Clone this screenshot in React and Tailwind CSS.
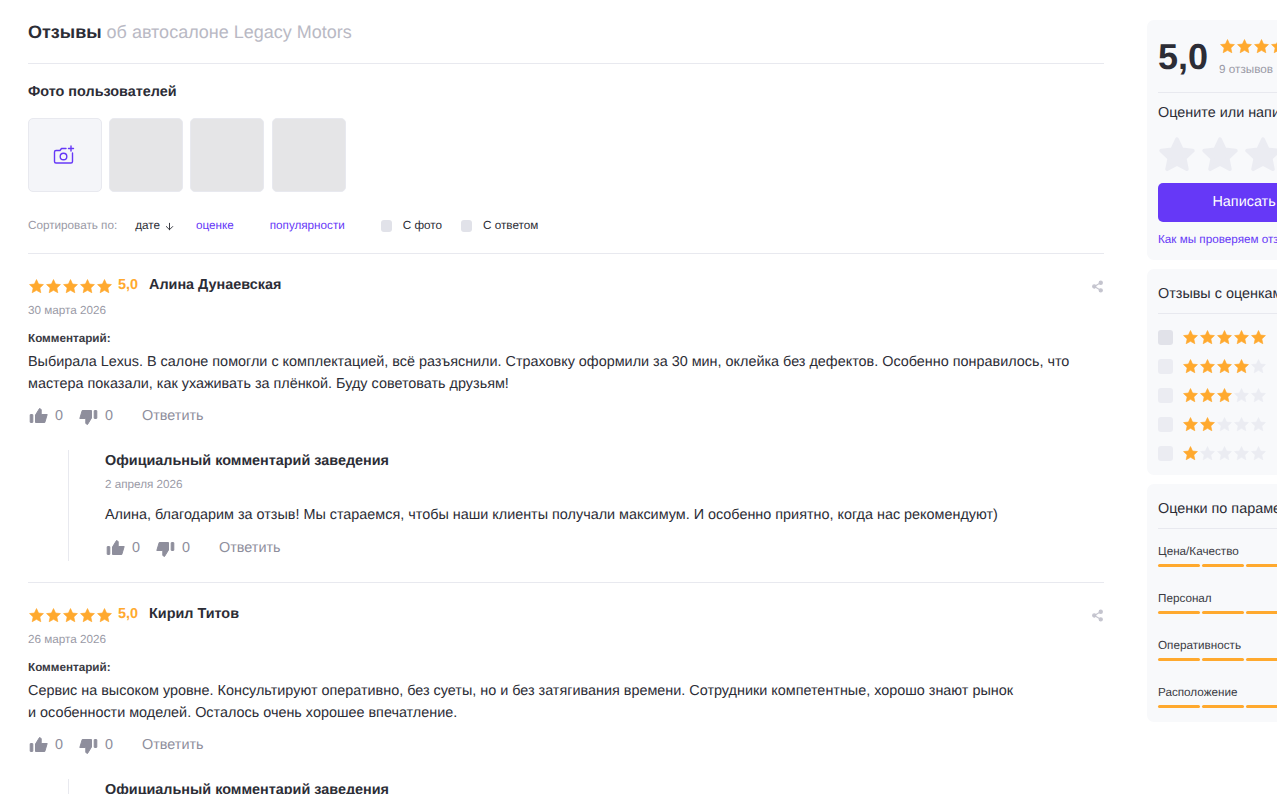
import { ArrowDown, Share2 } from "lucide-react";

const STAR = "M12 2.2l2.9 6.3 6.9.8-5.1 4.7 1.4 6.8L12 17.4l-6.1 3.4 1.4-6.8L2.2 9.3l6.9-.8z";

function Star({ size = 17, on = true, big = false }) {
  return (
    <svg width={size} height={size} viewBox="0 0 24 24" className={on ? "text-[#ffa92e]" : "text-[#ebecf2]"}>
      <path
        d={STAR}
        transform={big ? "translate(12 12) scale(.92) translate(-12 -12)" : undefined}
        fill="currentColor"
        stroke="currentColor"
        strokeWidth={big ? 2.4 : 0.9}
        strokeLinejoin="round"
      />
    </svg>
  );
}

function Stars({ count = 5, size = 17 }) {
  return (
    <div className="flex">
      {[1, 2, 3, 4, 5].map(i => <Star key={i} size={size} on={i <= count} />)}
    </div>
  );
}

function ThumbUp({ className = "" }) {
  return (
    <svg width="20" height="20" viewBox="0 0 20 20" className={`text-[#8e8e9c] ${className}`} fill="currentColor" stroke="currentColor" strokeLinejoin="round">
      <rect x="1.200" y="8.500" width="2.600" height="8" rx="0.400" />
      <path d="M6.500 9 10.500 2.500 12.200 3.500V8.500H18.200L15.800 16.500H6.500z" />
    </svg>
  );
}

function Actions() {
  return (
    <div className="flex items-center text-[14.4px] leading-[20px] text-[#8e8e9c]">
      <ThumbUp className="ml-[1px]" />
      <span className="ml-[6px] mr-[15px]">0</span>
      <ThumbUp className="rotate-180 translate-y-[1px]" />
      <span className="ml-[7px] mr-[29px]">0</span>
      <span>Ответить</span>
    </div>
  );
}

function Review({ name, date, lines, replyDate, reply, last }) {
  return (
    <div className={last ? "" : "border-b border-[#e8e9ef] pb-[21px] mb-[22px]"}>
      <div className="flex items-center h-[20px]">
        <Stars />
        <span className="ml-[5px] text-[14.4px] font-bold text-[#ffa92e]">5,0</span>
        <span className="ml-[11px] text-[14.4px] font-bold text-[#2c2d36]">{name}</span>
        <Share2 size={13} strokeWidth={2} fill="#c4c4ce" className="ml-auto text-[#c4c4ce]" />
      </div>
      <p className="mt-[7px] text-[11.7px] leading-[16px] text-[#9a9aa6]">{date}</p>
      <p className="mt-[12px] text-[11.7px] leading-[16px] font-bold text-[#3a3b44]">Комментарий:</p>
      <div className="mt-[5px] text-[14.4px] leading-[21.6px] whitespace-nowrap text-[#2c2d36]">
        {lines.map(l => <p key={l}>{l}</p>)}
      </div>
      <div className="mt-[11px]"><Actions /></div>
      <div className="mt-[24px] ml-[40px] border-l border-[#e8e9ef] pl-[36px] pt-[1px]">
        <p className="text-[14.4px] leading-[20px] font-bold text-[#2c2d36]">Официальный комментарий заведения</p>
        {reply && (
          <>
            <p className="mt-[6px] text-[11.7px] leading-[16px] text-[#9a9aa6]">{replyDate}</p>
            <p className="mt-[12px] text-[14.4px] leading-[21px] text-[#2c2d36]">{reply}</p>
            <div className="mt-[12px] pb-[3px]"><Actions /></div>
          </>
        )}
      </div>
    </div>
  );
}

function Rule() {
  return <div className="border-b border-[#e8e9ef]" />;
}

function ParamBar({ label }) {
  return (
    <div className="mb-[24px] last:mb-0">
      <p className="text-[11.7px] leading-[16px] text-[#3a3b44]">{label}</p>
      <div className="mt-[4px] flex gap-[2px]">
        {[1, 2, 3, 4, 5].map(i => <span key={i} className="h-[3px] w-[42px] shrink-0 rounded-full bg-[#ffa92e]" />)}
      </div>
    </div>
  );
}

export default function App() {
  return (
    <div className="flex h-[794px] w-[1277px] overflow-hidden bg-white font-['Liberation_Sans',Arial,sans-serif] [text-rendering:geometricPrecision]">
      {/* Main */}
      <main className="ml-[28px] w-[1076px] shrink-0">
        <h1 className="mt-[21px] text-[18px] leading-[22px] text-[#b9b9c4]">
          <b className="text-[#2c2d36]">Отзывы</b> об автосалоне Legacy Motors
        </h1>
        <div className="mt-[20px]"><Rule /></div>
        <h2 className="mt-[20px] text-[14.4px] leading-[17px] font-bold text-[#2c2d36]">Фото пользователей</h2>
        <div className="mt-[17px] flex gap-[7px]">
          <div className="flex h-[74px] w-[74px] items-center justify-center rounded-[5px] border border-[#e8e9ef] bg-[#f4f5f9]">
            <svg width="22" height="20" viewBox="0 0 22 20" fill="none" stroke="#6638f7" strokeWidth="1.4" strokeLinecap="round" strokeLinejoin="round" className="-ml-[2px]">
              <path d="M13 3.500H8.500L7 5.500H3a1.500 1.500 0 0 0-1.500 1.500v9.500A1.500 1.500 0 0 0 3 18h15a1.500 1.500 0 0 0 1.500-1.500V8" />
              <circle cx="10.500" cy="11.500" r="3.300" />
              <path d="M18 1v5M15.500 3.500h5" />
            </svg>
          </div>
          <div className="h-[74px] w-[74px] rounded-[5px] border border-[#e8e9ef] bg-[#e5e5e7]" />
          <div className="h-[74px] w-[74px] rounded-[5px] border border-[#e8e9ef] bg-[#e5e5e7]" />
          <div className="ml-[1px] h-[74px] w-[74px] rounded-[5px] border border-[#e8e9ef] bg-[#e5e5e7]" />
        </div>
        <div className="mt-[26px] flex h-[16px] items-center text-[11.7px] leading-[16px]">
          <span className="text-[#9a9aa6]">Сортировать по:</span>
          <span className="ml-[18px] text-[#2c2d36]">дате</span>
          <ArrowDown size={11} className="ml-[4px] text-[#2c2d36]" />
          <span className="ml-[21px] text-[#6638f7]">оценке</span>
          <span className="ml-[36px] text-[#6638f7]">популярности</span>
          <span className="ml-[36px] h-[12px] w-[11px] rounded-[3px] bg-[#e1e2e9]" />
          <span className="ml-[11px] text-[#2c2d36]">С фото</span>
          <span className="ml-[19px] h-[12px] w-[11px] rounded-[3px] bg-[#e1e2e9]" />
          <span className="ml-[11px] text-[#2c2d36]">С ответом</span>
        </div>
        <div className="mt-[19px] mb-[22px]"><Rule /></div>

        <Review
          name="Алина Дунаевская"
          date="30 марта 2026"
          lines={[
            "Выбирала Lexus. В салоне помогли с комплектацией, всё разъяснили. Страховку оформили за 30 мин, оклейка без дефектов. Особенно понравилось, что",
            "мастера показали, как ухаживать за плёнкой. Буду советовать друзьям!",
          ]}
          replyDate="2 апреля 2026"
          reply="Алина, благодарим за отзыв! Мы стараемся, чтобы наши клиенты получали максимум. И особенно приятно, когда нас рекомендуют)"
        />
        <Review
          last
          name="Кирил Титов"
          date="26 марта 2026"
          lines={[
            "Сервис на высоком уровне. Консультируют оперативно, без суеты, но и без затягивания времени. Сотрудники компетентные, хорошо знают рынок",
            "и особенности моделей. Осталось очень хорошее впечатление.",
          ]}
        />
      </main>

      {/* Sidebar */}
      <aside className="ml-[43px] mt-[20px] flex w-[237px] shrink-0 flex-col gap-[9px]">
        <section className="h-[240px] rounded-[7px] bg-[#f8f9fb] px-[11px] pt-[15px]">
          <div className="flex h-[58px] items-start border-b border-[#e8e9ef]">
            <span className="text-[36px] leading-[44px] font-bold text-[#2c2d36]">5,0</span>
            <div className="ml-[11px] pt-[3px]">
              <Stars />
              <p className="mt-[8px] text-[11.7px] leading-[14px] whitespace-nowrap text-[#9a9aa6]">9 отзывов</p>
            </div>
          </div>
          <p className="mt-[11px] text-[14.4px] leading-[18px] whitespace-nowrap text-[#2c2d36]">Оцените или напишите отзыв</p>
          <div className="mt-[12px] ml-[-2px] flex gap-[1px]">
            {[1, 2, 3, 4, 5].map(i => <Star key={i} size={42} on={false} big />)}
          </div>
          <div className="mt-[7px] flex h-[39px] items-center justify-center rounded-[5px] bg-[#6638f7] text-[14.4px] text-white">Написать отзыв</div>
          <p className="mt-[10px] text-[11.7px] leading-[16px] whitespace-nowrap text-[#6638f7]">Как мы проверяем отзывы</p>
        </section>

        <section className="h-[206px] rounded-[7px] bg-[#f8f9fb] px-[11px] pt-[16px]">
          <p className="border-b border-[#e8e9ef] pb-[10px] text-[14.4px] leading-[18px] whitespace-nowrap text-[#2c2d36]">Отзывы с оценками</p>
          <div className="mt-[15px] flex flex-col gap-[12px]">
            {[5, 4, 3, 2, 1].map(n => (
              <div key={n} className="flex h-[17px] items-center">
                <span className={`h-[15px] w-[15px] rounded-[3px] ${n === 5 ? "bg-[#e1e2e9]" : "bg-[#ebecf2]"}`} />
                <div className="ml-[9px]"><Stars count={n} /></div>
              </div>
            ))}
          </div>
        </section>

        <section className="h-[238px] rounded-[7px] bg-[#f8f9fb] px-[11px] pt-[16px]">
          <p className="border-b border-[#e8e9ef] pb-[10px] text-[14.4px] leading-[18px] whitespace-nowrap text-[#2c2d36]">Оценки по параметрам</p>
          <div className="mt-[15px]">
            <ParamBar label="Цена/Качество" />
            <ParamBar label="Персонал" />
            <ParamBar label="Оперативность" />
            <ParamBar label="Расположение" />
          </div>
        </section>
      </aside>
    </div>
  );
}
